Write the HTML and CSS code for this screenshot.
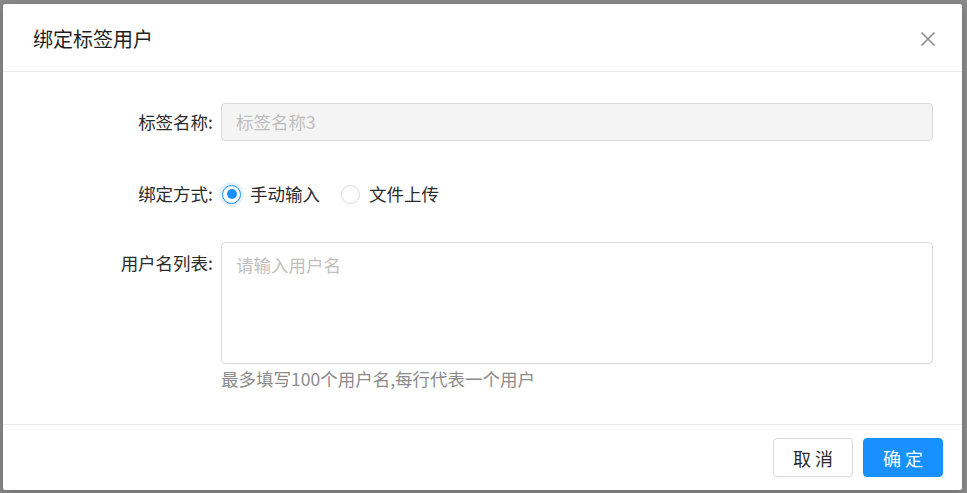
FILE: index.html
```html
<!DOCTYPE html>
<html lang="zh-CN">
<head>
<meta charset="utf-8">
<title>绑定标签用户</title>
<link rel="stylesheet" href="styles.css">
</head>
<body>
<div class="mask">
  <div class="modal">
    <div class="modal-header">
      <div class="modal-title">绑定标签用户</div>
      <button class="modal-close" aria-label="关闭">
        <svg width="16" height="16" viewBox="0 0 16 16"><path d="M1.5 1.5 L14.5 14.5 M14.5 1.5 L1.5 14.5" stroke="#8c8c8c" stroke-width="1.6" fill="none"/></svg>
      </button>
    </div>
    <div class="modal-body">
      <div class="form-row row-name">
        <label class="form-label">标签名称:</label>
        <div class="form-control">
          <div class="input disabled">标签名称3</div>
        </div>
      </div>
      <div class="form-row row-mode">
        <label class="form-label">绑定方式:</label>
        <div class="form-control radios">
          <span class="radio-item"><span class="radio checked"></span><span class="radio-text">手动输入</span></span>
          <span class="radio-item"><span class="radio"></span><span class="radio-text">文件上传</span></span>
        </div>
      </div>
      <div class="form-row row-list">
        <label class="form-label">用户名列表:</label>
        <div class="form-control">
          <div class="textarea"><span class="placeholder">请输入用户名</span></div>
          <div class="help">最多填写100个用户名,每行代表一个用户</div>
        </div>
      </div>
    </div>
    <div class="modal-footer">
      <button class="btn">取 消</button>
      <button class="btn btn-primary">确 定</button>
    </div>
  </div>
</div>
</body>
</html>
```

FILE: styles.css
```css
* { box-sizing: border-box; }
html, body { margin: 0; padding: 0; }
body {
  width: 967px;
  height: 493px;
  overflow: hidden;
  font-family: "Noto Sans CJK SC", "Liberation Sans", sans-serif;
  background: #898989;
}
.mask {
  width: 967px;
  height: 493px;
  padding: 4px 5px 3px 3px;
  background: #898989;
}
.modal {
  width: 959px;
  height: 486px;
  background: #fff;
  border-radius: 2px;
  box-shadow: 0 2px 8px rgba(0,0,0,0.2);
  display: flex;
  flex-direction: column;
}
.modal-header {
  height: 68px;
  border-bottom: 1px solid #ebebeb;
  display: flex;
  align-items: center;
  justify-content: space-between;
  padding: 0 26px 0 30px;
}
.modal-title {
  font-size: 20px;
  color: #1f1f1f;
  line-height: 1;
  padding-top: 2px;
}
.modal-close {
  border: 0;
  background: none;
  padding: 0;
  width: 16px;
  height: 16px;
  display: flex;
  margin-top: 2px;
}
.modal-body {
  flex: 1;
  padding: 31px 29px 0 29px;
}
.form-row {
  display: flex;
  align-items: flex-start;
}
.form-label {
  width: 189px;
  flex: none;
  text-align: right;
  padding-right: 8px;
  font-size: 17.5px;
  line-height: 38px;
  color: #2b2b2b;
}
.form-control { flex: 1; }
.input {
  height: 38px;
  border: 1px solid #d9d9d9;
  border-radius: 4px;
  padding: 0 14px;
  font-size: 17.5px;
  line-height: 36px;
  color: #333;
}
.input.disabled {
  background: #f4f4f4;
  color: #bfbfbf;
}
.row-mode { margin-top: 34px; }
.radios {
  display: flex;
  align-items: center;
  height: 38px;
}
.radio-item {
  display: flex;
  align-items: center;
  margin-right: 20px;
}
.radio {
  width: 19px;
  height: 19px;
  border: 1px solid #d9d9d9;
  border-radius: 50%;
  background: #fff;
  position: relative;
  margin-left: 1px;
}
.radio.checked {
  border-color: #1890ff;
  box-shadow: 0 0 0 3px #e8f3ff;
}
.radio.checked::after {
  content: "";
  position: absolute;
  left: 3.5px;
  top: 3.5px;
  width: 10px;
  height: 10px;
  border-radius: 50%;
  background: #1890ff;
}
.radio-text {
  font-size: 17.5px;
  color: #2b2b2b;
  margin-left: 9px;
  line-height: 38px;
}
.row-list { margin-top: 29px; }
.row-list .form-label { line-height: 42px; }
.textarea {
  height: 122px;
  border: 1px solid #d9d9d9;
  border-radius: 4px;
  padding: 10px 14px;
  font-size: 17.5px;
  line-height: 24px;
}
.placeholder { color: #bfbfbf; }
.help {
  font-size: 17.5px;
  color: #8c8c8c;
  line-height: 30px;
}
.modal-footer {
  height: 66px;
  border-top: 1px solid #ebebeb;
  display: flex;
  justify-content: flex-end;
  align-items: flex-start;
  gap: 10px;
  padding: 13px 19px 0 0;
}
.btn {
  width: 80px;
  height: 39px;
  border: 1px solid #d9d9d9;
  border-radius: 4px;
  background: #fff;
  color: #2b2b2b;
  font-family: "Noto Sans CJK SC", "Liberation Sans", sans-serif;
  font-size: 18px;
  padding: 0;
  box-shadow: 0 2px 0 rgba(0,0,0,0.015);
}
.btn-primary {
  background: #1890ff;
  border-color: #1890ff;
  color: #fff;
}
```
